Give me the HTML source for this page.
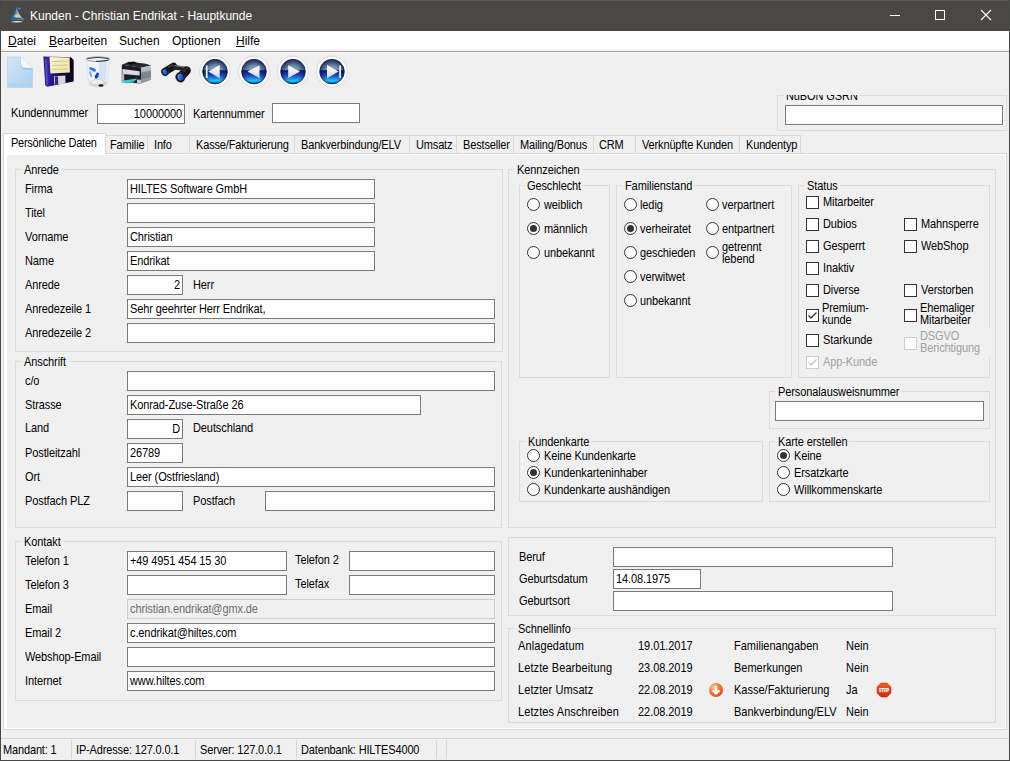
<!DOCTYPE html><html><head><meta charset="utf-8"><style>
html,body{margin:0;padding:0}
body{width:1010px;height:761px;overflow:hidden;background:#f0f0f0;position:relative;font-family:"Liberation Sans",sans-serif}
.a{position:absolute}
.t{position:absolute;font-size:11px;line-height:13px;white-space:nowrap;color:#000;letter-spacing:-0.1px;transform:scaleY(1.12);transform-origin:0 10px}
.t2{line-height:10.7px}
.t12{position:absolute;font-size:12px;line-height:14px;white-space:nowrap;color:#000}
u{text-decoration:underline;text-decoration-thickness:1px;text-underline-offset:1px}
</style></head><body>
<div class="a" style="left:0px;top:0px;width:1010px;height:31px;background:#4a4845"></div>
<div class="a" style="left:0px;top:0px;width:1010px;height:1px;background:#5c5a58"></div>
<svg class="a" style="left:8px;top:5px" width="20" height="20" viewBox="0 0 20 20">
<defs><linearGradient id="ig" x1="0" y1="0" x2="1" y2="0"><stop offset="0" stop-color="#1a66d0"/><stop offset="0.45" stop-color="#3c8ce8"/><stop offset="0.6" stop-color="#a8c8f0"/><stop offset="1" stop-color="#d8d8f0"/></linearGradient>
<radialGradient id="iy" cx="0.5" cy="0.5" r="0.5"><stop offset="0" stop-color="#fff080"/><stop offset="0.6" stop-color="#e8c830"/><stop offset="1" stop-color="#e8c830" stop-opacity="0"/></radialGradient></defs>
<path d="M8.6,2 Q7.6,9.5 1.8,14.6 L15.9,14.6 Q10,9.5 8.6,2 Z" fill="url(#ig)"/>
<ellipse cx="8.9" cy="11" rx="3" ry="2.2" fill="url(#iy)"/>
<path d="M4,12.8 L13.6,12.8 L15.2,14.2 L2.6,14.2 Z" fill="#1e5cc0"/>
<path d="M2.5,17 Q9,14.8 15.5,17 Q9,17.8 2.5,17 Z" fill="#e8ecec"/>
<circle cx="11.5" cy="3.4" r="0.9" fill="#5a9ae8"/>
</svg>
<div class="t12" style="left:30px;top:9px;color:#fff">Kunden - Christian Endrikat - Hauptkunde</div>
<div class="a" style="left:890px;top:15px;width:10px;height:1px;background:#fff"></div>
<div class="a" style="left:935px;top:10px;width:10px;height:10px;border:1px solid #fff;box-sizing:border-box"></div>
<svg class="a" style="left:980px;top:9px" width="12" height="12"><line x1="1" y1="1" x2="11" y2="11" stroke="#fff" stroke-width="1.1"/><line x1="11" y1="1" x2="1" y2="11" stroke="#fff" stroke-width="1.1"/></svg>
<div class="a" style="left:1px;top:31px;width:1008px;height:18px;background:#fff"></div>
<div class="a" style="left:1px;top:49px;width:1008px;height:2px;background:#f4f4f4"></div>
<div class="a" style="left:1px;top:51px;width:1008px;height:1px;background:#a0a0a0"></div>
<div class="a" style="left:1px;top:52px;width:1008px;height:1px;background:#f8f8f8"></div>
<div class="t12" style="left:8px;top:34px;"><u>D</u>atei</div>
<div class="t12" style="left:49px;top:34px;"><u>B</u>earbeiten</div>
<div class="t12" style="left:119px;top:34px;">Suchen</div>
<div class="t12" style="left:172px;top:34px;">Optionen</div>
<div class="t12" style="left:236px;top:34px;"><u>H</u>ilfe</div>
<svg class="a" style="left:0;top:52px" width="370" height="40" viewBox="0 52 370 40">
<defs>
<linearGradient id="pg" x1="0" y1="0" x2="1" y2="1"><stop offset="0" stop-color="#cfe6fa"/><stop offset="1" stop-color="#acd0f0"/></linearGradient>
<linearGradient id="fl" x1="0" y1="0" x2="1" y2="0"><stop offset="0" stop-color="#201470"/><stop offset="0.15" stop-color="#3424b0"/><stop offset="0.35" stop-color="#1c1270"/><stop offset="0.6" stop-color="#100a40"/><stop offset="1" stop-color="#060610"/></linearGradient>
<linearGradient id="lab" x1="0" y1="0" x2="1" y2="1"><stop offset="0" stop-color="#fbf6d0"/><stop offset="1" stop-color="#eee49a"/></linearGradient>
<linearGradient id="nb" x1="0" y1="0" x2="0" y2="1"><stop offset="0" stop-color="#98a0b0"/><stop offset="0.44" stop-color="#6a94b0"/><stop offset="0.46" stop-color="#0c1660"/><stop offset="0.66" stop-color="#1a48c8"/><stop offset="0.88" stop-color="#20c8f8"/><stop offset="1" stop-color="#0a4aa0"/></linearGradient>
<radialGradient id="nv" cx="0.5" cy="0.6" r="0.55"><stop offset="0.55" stop-color="#06104a" stop-opacity="0"/><stop offset="1" stop-color="#06104a" stop-opacity="0.75"/></radialGradient>
<linearGradient id="tri" x1="0" y1="0" x2="0" y2="1"><stop offset="0" stop-color="#ffffff"/><stop offset="1" stop-color="#d8d8dc"/></linearGradient>
<linearGradient id="prs" x1="0" y1="0" x2="0" y2="1"><stop offset="0" stop-color="#c4c8cc"/><stop offset="1" stop-color="#8a8e94"/></linearGradient>
<linearGradient id="ppr" x1="0" y1="0" x2="1" y2="1"><stop offset="0" stop-color="#50b8f8"/><stop offset="0.5" stop-color="#40c8d8"/><stop offset="1" stop-color="#108040"/></linearGradient>
<linearGradient id="lens" x1="0" y1="0" x2="1" y2="1"><stop offset="0" stop-color="#60b0ff"/><stop offset="0.6" stop-color="#1858e0"/><stop offset="1" stop-color="#0a2a80"/></linearGradient>
</defs>
<!-- new doc -->
<path d="M7.5,57 L20.5,57 Q25,61 32.5,68 L32.5,87.5 L7.5,87.5 Z" fill="url(#pg)" stroke="#b0cce8" stroke-width="0.6"/>
<path d="M21,57.5 Q20.5,64.5 23,67.8 Q28,68.3 32.2,68.2 L32.5,69.5 Q27,70 22.5,69.5 Q19.8,66 20.5,57 Z" fill="#9cc0e0" opacity="0.7"/>
<path d="M20.8,57 Q20.5,64.5 23,67.5 Q28,67.8 32.5,68 Q25,61 20.8,57 Z" fill="#f4faff"/>
<rect x="8" y="83" width="24" height="4" fill="#a8d0f4" opacity="0.6"/>
<!-- floppy -->
<path d="M43.4,56.4 L70.8,57.2 L73.6,60 L73.6,81.6 L47.3,86.7 L45.2,85.2 Z" fill="url(#fl)"/>
<path d="M49.5,57.1 L69.6,57.6 L69.9,72.4 L50.4,73.6 Z" fill="url(#lab)"/>
<path d="M52,61.5 L67.5,61.2 M52.3,65.4 L67.7,65.1 M52.6,69.3 L67.9,69" stroke="#b8b090" stroke-width="0.7"/>
<path d="M53.8,76.2 L65.3,75.6 L65.5,83.8 L54.2,84.6 Z" fill="#d4d4dc"/>
<path d="M54.8,76.6 L58,76.4 L58.2,84.2 L55,84.4 Z" fill="#302878"/>
<path d="M44.5,59 L47,58.8 L48.2,84.5 L46,85 Z" fill="#7060e0" opacity="0.55"/>
<!-- trash -->
<path d="M86.5,59.5 L109.5,59.5 L107,85 Q98,89 89,85 Z" fill="#f0f4f8" stroke="#d0d8e0" stroke-width="0.6"/>
<path d="M99,61.5 L107.5,61.5 L106,80 L99,80 Z" fill="#cfe0f4" opacity="0.9"/>
<ellipse cx="98" cy="59.2" rx="11.8" ry="2.3" fill="#eef2f6" stroke="#8a9098" stroke-width="0.9"/>
<path d="M87,58.6 Q98,56.2 109,58.6" fill="none" stroke="#404448" stroke-width="1"/>
<path d="M96,61.3 Q103,61.2 108.5,60" fill="none" stroke="#202428" stroke-width="0.9"/>
<ellipse cx="97.8" cy="83" rx="8.8" ry="4" fill="#d4d6d8"/>
<ellipse cx="97" cy="82" rx="6" ry="2.2" fill="#eceeef"/>
<ellipse cx="101" cy="85.5" rx="2.6" ry="1.3" fill="#1a1a1a"/>
<path d="M90.5,68.5 L94.5,70" stroke="#2a78e8" stroke-width="2.6" stroke-linecap="round"/>
<path d="M93.5,68.2 L96,71.6 L92.8,71.6 Z" fill="#2a78e8"/>
<path d="M97.6,74 L96.2,77.2" stroke="#0c3cd8" stroke-width="2.8" stroke-linecap="round"/>
<path d="M99.2,76.2 L95,78.6 L94.8,74.8 Z" fill="#0c3cd8"/>
<path d="M90,72 L91.2,76" stroke="#7aa4e8" stroke-width="2" stroke-linecap="round"/>
<!-- printer -->
<path d="M141,67.5 L151,65.5 L151,80 L141,83.4 Z" fill="url(#prs)"/>
<path d="M141,72.5 L151,70.5 L151,77 L141,79.5 Z" fill="#56687e" opacity="0.55"/>
<path d="M121.8,64.8 L129,61.8 L146,63.8 L151,65.5 L141,67.5 Z" fill="#262a2e"/>
<path d="M127,63 L133,61.6 L137,62.6 L131,64.4 Z" fill="#080808"/>
<path d="M121.8,64.8 L141,67.5 L141,83.4 L121.8,82.2 Z" fill="#1a1c20"/>
<path d="M122.4,69 L139.6,71.2 L139.6,75.6 L122.4,73.9 Z" fill="#d6dae2"/>
<path d="M121.8,74 L124.2,74.3 L124.2,82.3 L121.8,82.2 Z" fill="#b4b8bc"/>
<path d="M137,79.4 L141,79.8 L141,83.4 L137,83 Z" fill="#c4c8cc"/>
<path d="M123.2,80.4 L137.2,78.6 L133,82.9 L124.5,83.3 Z" fill="url(#ppr)"/>
<!-- binoculars -->
<line x1="166" y1="71" x2="173.5" y2="66.5" stroke="#141414" stroke-width="7.5" stroke-linecap="round"/>
<line x1="181" y1="76.5" x2="186.5" y2="70.5" stroke="#141414" stroke-width="8.6" stroke-linecap="round"/>
<path d="M172.5,64.5 L185.5,66.8 L184.5,71 L173.5,69.5 Z" fill="#262626"/>
<path d="M174.5,65.5 L184,67.2" stroke="#8a8a8a" stroke-width="0.9"/>
<path d="M168,67.5 L173,64.5" stroke="#606060" stroke-width="0.8"/>
<path d="M183.5,72 L188,67" stroke="#5a5a5a" stroke-width="0.8"/>
<ellipse cx="165" cy="72" rx="3.6" ry="4" transform="rotate(-30 165 72)" fill="#0a0a0a" stroke="#505050" stroke-width="0.5"/>
<ellipse cx="165.2" cy="72" rx="2.2" ry="2.9" transform="rotate(-30 165.2 72)" fill="url(#lens)"/>
<ellipse cx="180.3" cy="77.3" rx="4.6" ry="5" transform="rotate(-30 180.3 77.3)" fill="#0a0a0a" stroke="#505050" stroke-width="0.5"/>
<ellipse cx="180.6" cy="77.2" rx="3" ry="3.6" transform="rotate(-30 180.6 77.2)" fill="url(#lens)"/>
<!-- nav buttons -->
<circle cx="215" cy="71.6" r="15.6" fill="#fbfbfb" stroke="#d8d8d8" stroke-width="0.9"/><circle cx="215" cy="71.6" r="12.3" fill="url(#nb)"/><circle cx="215" cy="71.6" r="12.3" fill="url(#nv)" stroke="#0a1a58" stroke-width="0.7"/><circle cx="254" cy="71.6" r="15.6" fill="#fbfbfb" stroke="#d8d8d8" stroke-width="0.9"/><circle cx="254" cy="71.6" r="12.3" fill="url(#nb)"/><circle cx="254" cy="71.6" r="12.3" fill="url(#nv)" stroke="#0a1a58" stroke-width="0.7"/><circle cx="293" cy="71.6" r="15.6" fill="#fbfbfb" stroke="#d8d8d8" stroke-width="0.9"/><circle cx="293" cy="71.6" r="12.3" fill="url(#nb)"/><circle cx="293" cy="71.6" r="12.3" fill="url(#nv)" stroke="#0a1a58" stroke-width="0.7"/><circle cx="332" cy="71.6" r="15.6" fill="#fbfbfb" stroke="#d8d8d8" stroke-width="0.9"/><circle cx="332" cy="71.6" r="12.3" fill="url(#nb)"/><circle cx="332" cy="71.6" r="12.3" fill="url(#nv)" stroke="#0a1a58" stroke-width="0.7"/>
<rect x="205.8" y="65.5" width="1.8" height="12.5" fill="#f0f0f4"/>
<polygon points="208.2,71.6 219.7,65 219.7,78.2" fill="url(#tri)"/>
<polygon points="247.5,71.6 259.5,65.2 259.5,78" fill="url(#tri)"/>
<polygon points="300,71.6 288.2,65.3 288.2,78.1" fill="url(#tri)"/>
<polygon points="338.6,71.6 327,65 327,78.2" fill="url(#tri)"/>
<rect x="339.2" y="65.5" width="1.8" height="12.5" fill="#f0f0f4"/>
</svg>
<div class="t" style="left:11px;top:107px;">Kundennummer</div>
<div class="a" style="left:97px;top:104px;width:88px;height:20px;border:1px solid #7a7a7a;background:#ffffff;box-sizing:border-box"></div>
<div class="t" style="left:97px;width:85px;text-align:right;top:108px;color:#000;">10000000</div>
<div class="t" style="left:193px;top:108px;">Kartennummer</div>
<div class="a" style="left:272px;top:103px;width:88px;height:20px;border:1px solid #7a7a7a;background:#ffffff;box-sizing:border-box"></div>
<div class="a" style="left:777px;top:95px;width:230px;height:36px;border:1px solid #dcdcdc;box-sizing:border-box"></div>
<div class="a" style="left:784px;top:94px;width:75px;height:2px;background:#f0f0f0"></div>
<div class="a" style="left:784px;top:95px;width:75px;height:5px;overflow:hidden;background:#f0f0f0"><div class="t" style="left:2px;top:-5px;letter-spacing:-0.1px">NuBON GSRN</div></div>
<div class="a" style="left:785px;top:105px;width:218px;height:20px;border:1px solid #7a7a7a;background:#ffffff;box-sizing:border-box"></div>
<div class="a" style="left:3px;top:153px;width:1004px;height:577px;border:1px solid #d9d9d9;background:#fff;box-sizing:border-box"></div>
<div class="a" style="left:7px;top:155px;width:998px;height:573px;background:#f0f0f0"></div>
<div class="a" style="left:105px;top:135px;width:43px;height:18px;border:1px solid #d9d9d9;border-bottom:none;background:#f0f0f0;box-sizing:border-box"></div>
<div class="t" style="left:110px;top:139px;letter-spacing:-0.15px">Familie</div>
<div class="a" style="left:147px;top:135px;width:43px;height:18px;border:1px solid #d9d9d9;border-bottom:none;background:#f0f0f0;box-sizing:border-box"></div>
<div class="t" style="left:154px;top:139px;letter-spacing:-0.15px">Info</div>
<div class="a" style="left:189px;top:135px;width:106px;height:18px;border:1px solid #d9d9d9;border-bottom:none;background:#f0f0f0;box-sizing:border-box"></div>
<div class="t" style="left:196px;top:139px;letter-spacing:-0.15px">Kasse/Fakturierung</div>
<div class="a" style="left:294px;top:135px;width:116px;height:18px;border:1px solid #d9d9d9;border-bottom:none;background:#f0f0f0;box-sizing:border-box"></div>
<div class="t" style="left:301px;top:139px;letter-spacing:-0.15px">Bankverbindung/ELV</div>
<div class="a" style="left:409px;top:135px;width:48px;height:18px;border:1px solid #d9d9d9;border-bottom:none;background:#f0f0f0;box-sizing:border-box"></div>
<div class="t" style="left:416px;top:139px;letter-spacing:-0.15px">Umsatz</div>
<div class="a" style="left:456px;top:135px;width:58px;height:18px;border:1px solid #d9d9d9;border-bottom:none;background:#f0f0f0;box-sizing:border-box"></div>
<div class="t" style="left:463px;top:139px;letter-spacing:-0.15px">Bestseller</div>
<div class="a" style="left:513px;top:135px;width:81px;height:18px;border:1px solid #d9d9d9;border-bottom:none;background:#f0f0f0;box-sizing:border-box"></div>
<div class="t" style="left:520px;top:139px;letter-spacing:-0.15px">Mailing/Bonus</div>
<div class="a" style="left:593px;top:135px;width:43px;height:18px;border:1px solid #d9d9d9;border-bottom:none;background:#f0f0f0;box-sizing:border-box"></div>
<div class="t" style="left:599px;top:139px;letter-spacing:-0.15px">CRM</div>
<div class="a" style="left:635px;top:135px;width:105px;height:18px;border:1px solid #d9d9d9;border-bottom:none;background:#f0f0f0;box-sizing:border-box"></div>
<div class="t" style="left:642px;top:139px;letter-spacing:-0.15px">Verknüpfte Kunden</div>
<div class="a" style="left:739px;top:135px;width:62px;height:18px;border:1px solid #d9d9d9;border-bottom:none;background:#f0f0f0;box-sizing:border-box"></div>
<div class="t" style="left:746px;top:139px;letter-spacing:-0.15px">Kundentyp</div>
<div class="a" style="left:3px;top:133px;width:103px;height:21px;border:1px solid #d9d9d9;border-bottom:none;background:#fff;box-sizing:border-box"></div>
<div class="a" style="left:4px;top:153px;width:101px;height:1px;background:#fff"></div>
<div class="t" style="left:11px;top:137px;letter-spacing:-0.25px">Persönliche Daten</div>
<div class="a" style="left:15px;top:169px;width:488px;height:183px;border:1px solid #dcdcdc;box-sizing:border-box"></div>
<div class="t" style="left:21px;top:164px;padding:0 2px 0 3px;background:#f0f0f0;">Anrede</div>
<div class="t" style="left:25px;top:183px;">Firma</div>
<div class="a" style="left:127px;top:179px;width:248px;height:20px;border:1px solid #7a7a7a;background:#ffffff;box-sizing:border-box"></div>
<div class="t" style="left:130px;top:183px;color:#000;">HILTES Software GmbH</div>
<div class="t" style="left:25px;top:207px;">Titel</div>
<div class="a" style="left:127px;top:203px;width:248px;height:20px;border:1px solid #7a7a7a;background:#ffffff;box-sizing:border-box"></div>
<div class="t" style="left:25px;top:231px;">Vorname</div>
<div class="a" style="left:127px;top:227px;width:248px;height:20px;border:1px solid #7a7a7a;background:#ffffff;box-sizing:border-box"></div>
<div class="t" style="left:130px;top:231px;color:#000;">Christian</div>
<div class="t" style="left:25px;top:255px;">Name</div>
<div class="a" style="left:127px;top:251px;width:248px;height:20px;border:1px solid #7a7a7a;background:#ffffff;box-sizing:border-box"></div>
<div class="t" style="left:130px;top:255px;color:#000;">Endrikat</div>
<div class="t" style="left:25px;top:279px;">Anrede</div>
<div class="a" style="left:127px;top:275px;width:56px;height:20px;border:1px solid #7a7a7a;background:#ffffff;box-sizing:border-box"></div>
<div class="t" style="left:25px;top:303px;">Anredezeile 1</div>
<div class="a" style="left:127px;top:299px;width:368px;height:20px;border:1px solid #7a7a7a;background:#ffffff;box-sizing:border-box"></div>
<div class="t" style="left:130px;top:303px;color:#000;">Sehr geehrter Herr Endrikat,</div>
<div class="t" style="left:25px;top:327px;">Anredezeile 2</div>
<div class="a" style="left:127px;top:323px;width:368px;height:20px;border:1px solid #7a7a7a;background:#ffffff;box-sizing:border-box"></div>
<div class="a" style="left:127px;top:275px;width:56px;height:20px;border:1px solid #7a7a7a;background:#ffffff;box-sizing:border-box"></div>
<div class="t" style="left:127px;width:53px;text-align:right;top:279px;color:#000;">2</div>
<div class="t" style="left:193px;top:279px;">Herr</div>
<div class="a" style="left:15px;top:361px;width:487px;height:167px;border:1px solid #dcdcdc;box-sizing:border-box"></div>
<div class="t" style="left:21px;top:356px;padding:0 2px 0 3px;background:#f0f0f0;">Anschrift</div>
<div class="t" style="left:25px;top:375px;">c/o</div>
<div class="a" style="left:127px;top:371px;width:368px;height:20px;border:1px solid #7a7a7a;background:#ffffff;box-sizing:border-box"></div>
<div class="t" style="left:25px;top:399px;">Strasse</div>
<div class="a" style="left:127px;top:395px;width:294px;height:20px;border:1px solid #7a7a7a;background:#ffffff;box-sizing:border-box"></div>
<div class="t" style="left:130px;top:399px;color:#000;">Konrad-Zuse-Straße 26</div>
<div class="t" style="left:25px;top:422px;">Land</div>
<div class="a" style="left:127px;top:419px;width:56px;height:20px;border:1px solid #7a7a7a;background:#ffffff;box-sizing:border-box"></div>
<div class="t" style="left:127px;width:53px;text-align:right;top:423px;color:#000;">D</div>
<div class="t" style="left:25px;top:447px;">Postleitzahl</div>
<div class="a" style="left:127px;top:443px;width:56px;height:20px;border:1px solid #7a7a7a;background:#ffffff;box-sizing:border-box"></div>
<div class="t" style="left:130px;top:447px;color:#000;">26789</div>
<div class="t" style="left:25px;top:471px;">Ort</div>
<div class="a" style="left:127px;top:467px;width:368px;height:20px;border:1px solid #7a7a7a;background:#ffffff;box-sizing:border-box"></div>
<div class="t" style="left:130px;top:471px;color:#000;">Leer (Ostfriesland)</div>
<div class="t" style="left:25px;top:495px;">Postfach PLZ</div>
<div class="a" style="left:127px;top:491px;width:56px;height:20px;border:1px solid #7a7a7a;background:#ffffff;box-sizing:border-box"></div>
<div class="t" style="left:193px;top:422px;">Deutschland</div>
<div class="t" style="left:193px;top:495px;">Postfach</div>
<div class="a" style="left:265px;top:491px;width:230px;height:20px;border:1px solid #7a7a7a;background:#ffffff;box-sizing:border-box"></div>
<div class="a" style="left:15px;top:541px;width:487px;height:160px;border:1px solid #dcdcdc;box-sizing:border-box"></div>
<div class="t" style="left:21px;top:536px;padding:0 2px 0 3px;background:#f0f0f0;">Kontakt</div>
<div class="t" style="left:25px;top:555px;">Telefon 1</div>
<div class="a" style="left:127px;top:551px;width:160px;height:20px;border:1px solid #7a7a7a;background:#ffffff;box-sizing:border-box"></div>
<div class="t" style="left:130px;top:555px;color:#000;">+49 4951 454 15 30</div>
<div class="t" style="left:25px;top:579px;">Telefon 3</div>
<div class="a" style="left:127px;top:575px;width:160px;height:20px;border:1px solid #7a7a7a;background:#ffffff;box-sizing:border-box"></div>
<div class="t" style="left:25px;top:603px;">Email</div>
<div class="a" style="left:127px;top:599px;width:368px;height:20px;border:1px solid #cccccc;background:#f0f0f0;box-sizing:border-box"></div>
<div class="t" style="left:130px;top:603px;color:#6d6d6d;">christian.endrikat@gmx.de</div>
<div class="t" style="left:25px;top:627px;">Email 2</div>
<div class="a" style="left:127px;top:623px;width:368px;height:20px;border:1px solid #7a7a7a;background:#ffffff;box-sizing:border-box"></div>
<div class="t" style="left:130px;top:627px;color:#000;">c.endrikat@hiltes.com</div>
<div class="t" style="left:25px;top:651px;">Webshop-Email</div>
<div class="a" style="left:127px;top:647px;width:368px;height:20px;border:1px solid #7a7a7a;background:#ffffff;box-sizing:border-box"></div>
<div class="t" style="left:25px;top:675px;">Internet</div>
<div class="a" style="left:127px;top:671px;width:368px;height:20px;border:1px solid #7a7a7a;background:#ffffff;box-sizing:border-box"></div>
<div class="t" style="left:130px;top:675px;color:#000;">www.hiltes.com</div>
<div class="t" style="left:295px;top:554px;">Telefon 2</div>
<div class="a" style="left:349px;top:551px;width:146px;height:20px;border:1px solid #7a7a7a;background:#ffffff;box-sizing:border-box"></div>
<div class="t" style="left:295px;top:578px;">Telefax</div>
<div class="a" style="left:349px;top:575px;width:146px;height:20px;border:1px solid #7a7a7a;background:#ffffff;box-sizing:border-box"></div>
<div class="a" style="left:508px;top:169px;width:488px;height:359px;border:1px solid #dcdcdc;box-sizing:border-box"></div>
<div class="t" style="left:514px;top:164px;padding:0 2px 0 3px;background:#f0f0f0;">Kennzeichen</div>
<div class="a" style="left:519px;top:185px;width:91px;height:193px;border:1px solid #dcdcdc;box-sizing:border-box"></div>
<div class="t" style="left:524px;top:180px;padding:0 2px 0 3px;background:#f0f0f0;">Geschlecht</div>
<div class="a" style="left:527px;top:198px;width:13px;height:13px;border:1px solid #333;border-radius:50%;background:#fff;box-sizing:border-box"></div>
<div class="t" style="left:544px;top:199px;">weiblich</div>
<div class="a" style="left:527px;top:222px;width:13px;height:13px;border:1px solid #333;border-radius:50%;background:#fff;box-sizing:border-box"></div>
<div class="a" style="left:530px;top:225px;width:7px;height:7px;border-radius:50%;background:#333"></div>
<div class="t" style="left:544px;top:223px;">männlich</div>
<div class="a" style="left:527px;top:246px;width:13px;height:13px;border:1px solid #333;border-radius:50%;background:#fff;box-sizing:border-box"></div>
<div class="t" style="left:544px;top:247px;">unbekannt</div>
<div class="a" style="left:616px;top:185px;width:176px;height:193px;border:1px solid #dcdcdc;box-sizing:border-box"></div>
<div class="t" style="left:622px;top:180px;padding:0 2px 0 3px;background:#f0f0f0;">Familienstand</div>
<div class="a" style="left:624px;top:198px;width:13px;height:13px;border:1px solid #333;border-radius:50%;background:#fff;box-sizing:border-box"></div>
<div class="t" style="left:640px;top:199px;">ledig</div>
<div class="a" style="left:624px;top:222px;width:13px;height:13px;border:1px solid #333;border-radius:50%;background:#fff;box-sizing:border-box"></div>
<div class="a" style="left:627px;top:225px;width:7px;height:7px;border-radius:50%;background:#333"></div>
<div class="t" style="left:640px;top:223px;">verheiratet</div>
<div class="a" style="left:624px;top:246px;width:13px;height:13px;border:1px solid #333;border-radius:50%;background:#fff;box-sizing:border-box"></div>
<div class="t" style="left:640px;top:247px;">geschieden</div>
<div class="a" style="left:624px;top:270px;width:13px;height:13px;border:1px solid #333;border-radius:50%;background:#fff;box-sizing:border-box"></div>
<div class="t" style="left:640px;top:271px;">verwitwet</div>
<div class="a" style="left:624px;top:294px;width:13px;height:13px;border:1px solid #333;border-radius:50%;background:#fff;box-sizing:border-box"></div>
<div class="t" style="left:640px;top:295px;">unbekannt</div>
<div class="a" style="left:706px;top:198px;width:13px;height:13px;border:1px solid #333;border-radius:50%;background:#fff;box-sizing:border-box"></div>
<div class="t" style="left:722px;top:199px;">verpartnert</div>
<div class="a" style="left:706px;top:222px;width:13px;height:13px;border:1px solid #333;border-radius:50%;background:#fff;box-sizing:border-box"></div>
<div class="t" style="left:722px;top:223px;">entpartnert</div>
<div class="a" style="left:706px;top:246px;width:13px;height:13px;border:1px solid #333;border-radius:50%;background:#fff;box-sizing:border-box"></div>
<div class="t t2" style="left:722px;top:242px">getrennt<br>lebend</div>
<div class="a" style="left:798px;top:185px;width:192px;height:193px;border:1px solid #dcdcdc;box-sizing:border-box"></div>
<div class="t" style="left:804px;top:180px;padding:0 2px 0 3px;background:#f0f0f0;">Status</div>
<div class="a" style="left:980px;top:328px;width:12px;height:30px;background:#f0f0f0"></div>
<div class="a" style="left:806px;top:196px;width:13px;height:13px;border:1px solid #333;background:#fff;box-sizing:border-box"></div>
<div class="t" style="left:823px;top:196px;color:#000">Mitarbeiter</div>
<div class="a" style="left:806px;top:218px;width:13px;height:13px;border:1px solid #333;background:#fff;box-sizing:border-box"></div>
<div class="t" style="left:823px;top:218px;color:#000">Dubios</div>
<div class="a" style="left:806px;top:240px;width:13px;height:13px;border:1px solid #333;background:#fff;box-sizing:border-box"></div>
<div class="t" style="left:823px;top:240px;color:#000">Gesperrt</div>
<div class="a" style="left:806px;top:262px;width:13px;height:13px;border:1px solid #333;background:#fff;box-sizing:border-box"></div>
<div class="t" style="left:823px;top:262px;color:#000">Inaktiv</div>
<div class="a" style="left:806px;top:284px;width:13px;height:13px;border:1px solid #333;background:#fff;box-sizing:border-box"></div>
<div class="t" style="left:823px;top:284px;color:#000">Diverse</div>
<div class="a" style="left:806px;top:309px;width:13px;height:13px;border:1px solid #333;background:#fff;box-sizing:border-box"></div>
<svg class="a" style="left:806px;top:309px" width="13" height="13"><polyline points="2.5,6.5 5,9 10.5,3.5" fill="none" stroke="#333" stroke-width="1.3"/></svg>
<div class="t t2" style="left:822px;top:303px;color:#000">Premium-<br>kunde</div>
<div class="a" style="left:806px;top:334px;width:13px;height:13px;border:1px solid #333;background:#fff;box-sizing:border-box"></div>
<div class="t" style="left:823px;top:334px;color:#000">Starkunde</div>
<div class="a" style="left:806px;top:356px;width:13px;height:13px;border:1px solid #cccccc;background:#fff;box-sizing:border-box"></div>
<svg class="a" style="left:806px;top:356px" width="13" height="13"><polyline points="2.5,6.5 5,9 10.5,3.5" fill="none" stroke="#c0c0c0" stroke-width="1.3"/></svg>
<div class="t" style="left:823px;top:356px;color:#a0a0a0">App-Kunde</div>
<div class="a" style="left:904px;top:218px;width:13px;height:13px;border:1px solid #333;background:#fff;box-sizing:border-box"></div>
<div class="t" style="left:921px;top:218px;color:#000">Mahnsperre</div>
<div class="a" style="left:904px;top:240px;width:13px;height:13px;border:1px solid #333;background:#fff;box-sizing:border-box"></div>
<div class="t" style="left:921px;top:240px;color:#000">WebShop</div>
<div class="a" style="left:904px;top:284px;width:13px;height:13px;border:1px solid #333;background:#fff;box-sizing:border-box"></div>
<div class="t" style="left:921px;top:284px;color:#000">Verstorben</div>
<div class="a" style="left:904px;top:309px;width:13px;height:13px;border:1px solid #333;background:#fff;box-sizing:border-box"></div>
<div class="t t2" style="left:920px;top:303px;color:#000">Ehemaliger<br>Mitarbeiter</div>
<div class="a" style="left:904px;top:337px;width:13px;height:13px;border:1px solid #cccccc;background:#fff;box-sizing:border-box"></div>
<div class="t t2" style="left:920px;top:331px;color:#a0a0a0">DSGVO<br>Berichtigung</div>
<div class="a" style="left:769px;top:391px;width:221px;height:38px;border:1px solid #dcdcdc;box-sizing:border-box"></div>
<div class="t" style="left:775px;top:386px;padding:0 2px 0 3px;background:#f0f0f0;">Personalausweisnummer</div>
<div class="a" style="left:775px;top:401px;width:209px;height:20px;border:1px solid #7a7a7a;background:#ffffff;box-sizing:border-box"></div>
<div class="a" style="left:519px;top:441px;width:244px;height:61px;border:1px solid #dcdcdc;box-sizing:border-box"></div>
<div class="t" style="left:525px;top:436px;padding:0 2px 0 3px;background:#f0f0f0;">Kundenkarte</div>
<div class="a" style="left:527px;top:449px;width:13px;height:13px;border:1px solid #333;border-radius:50%;background:#fff;box-sizing:border-box"></div>
<div class="t" style="left:544px;top:450px;">Keine Kundenkarte</div>
<div class="a" style="left:527px;top:466px;width:13px;height:13px;border:1px solid #333;border-radius:50%;background:#fff;box-sizing:border-box"></div>
<div class="a" style="left:530px;top:469px;width:7px;height:7px;border-radius:50%;background:#333"></div>
<div class="t" style="left:544px;top:467px;">Kundenkarteninhaber</div>
<div class="a" style="left:527px;top:483px;width:13px;height:13px;border:1px solid #333;border-radius:50%;background:#fff;box-sizing:border-box"></div>
<div class="t" style="left:544px;top:484px;">Kundenkarte aushändigen</div>
<div class="a" style="left:769px;top:441px;width:221px;height:61px;border:1px solid #dcdcdc;box-sizing:border-box"></div>
<div class="t" style="left:775px;top:436px;padding:0 2px 0 3px;background:#f0f0f0;">Karte erstellen</div>
<div class="a" style="left:777px;top:449px;width:13px;height:13px;border:1px solid #333;border-radius:50%;background:#fff;box-sizing:border-box"></div>
<div class="a" style="left:780px;top:452px;width:7px;height:7px;border-radius:50%;background:#333"></div>
<div class="t" style="left:794px;top:450px;">Keine</div>
<div class="a" style="left:777px;top:466px;width:13px;height:13px;border:1px solid #333;border-radius:50%;background:#fff;box-sizing:border-box"></div>
<div class="t" style="left:794px;top:467px;">Ersatzkarte</div>
<div class="a" style="left:777px;top:483px;width:13px;height:13px;border:1px solid #333;border-radius:50%;background:#fff;box-sizing:border-box"></div>
<div class="t" style="left:794px;top:484px;">Willkommenskarte</div>
<div class="a" style="left:508px;top:537px;width:488px;height:79px;border:1px solid #dcdcdc;box-sizing:border-box"></div>
<div class="t" style="left:519px;top:551px;">Beruf</div>
<div class="a" style="left:613px;top:547px;width:280px;height:20px;border:1px solid #7a7a7a;background:#ffffff;box-sizing:border-box"></div>
<div class="t" style="left:519px;top:573px;">Geburtsdatum</div>
<div class="a" style="left:613px;top:569px;width:88px;height:20px;border:1px solid #7a7a7a;background:#ffffff;box-sizing:border-box"></div>
<div class="t" style="left:616px;top:573px;color:#000;">14.08.1975</div>
<div class="t" style="left:519px;top:595px;">Geburtsort</div>
<div class="a" style="left:613px;top:591px;width:280px;height:20px;border:1px solid #7a7a7a;background:#ffffff;box-sizing:border-box"></div>
<div class="a" style="left:508px;top:628px;width:488px;height:95px;border:1px solid #dcdcdc;box-sizing:border-box"></div>
<div class="t" style="left:515px;top:623px;padding:0 2px 0 3px;background:#f0f0f0;">Schnellinfo</div>
<div class="t" style="left:518px;top:640px;letter-spacing:0.1px">Anlagedatum</div>
<div class="t" style="left:638px;top:640px;letter-spacing:-0.05px">19.01.2017</div>
<div class="t" style="left:734px;top:640px;letter-spacing:0">Familienangaben</div>
<div class="t" style="left:846px;top:640px;letter-spacing:0">Nein</div>
<div class="t" style="left:518px;top:662px;letter-spacing:0.1px">Letzte Bearbeitung</div>
<div class="t" style="left:638px;top:662px;letter-spacing:-0.05px">23.08.2019</div>
<div class="t" style="left:734px;top:662px;letter-spacing:0">Bemerkungen</div>
<div class="t" style="left:846px;top:662px;letter-spacing:0">Nein</div>
<div class="t" style="left:518px;top:684px;letter-spacing:0.1px">Letzter Umsatz</div>
<div class="t" style="left:638px;top:684px;letter-spacing:-0.05px">22.08.2019</div>
<div class="t" style="left:734px;top:684px;letter-spacing:0">Kasse/Fakturierung</div>
<div class="t" style="left:846px;top:684px;letter-spacing:0">Ja</div>
<div class="t" style="left:518px;top:706px;letter-spacing:0.1px">Letztes Anschreiben</div>
<div class="t" style="left:638px;top:706px;letter-spacing:-0.05px">22.08.2019</div>
<div class="t" style="left:734px;top:706px;letter-spacing:0">Bankverbindung/ELV</div>
<div class="t" style="left:846px;top:706px;letter-spacing:0">Nein</div>
<svg class="a" style="left:708px;top:682px" width="16" height="16" viewBox="0 0 16 16">
<defs><radialGradient id="og" cx="0.35" cy="0.3" r="0.8"><stop offset="0" stop-color="#ffd0a0"/><stop offset="0.45" stop-color="#f47838"/><stop offset="1" stop-color="#e04818"/></radialGradient></defs>
<circle cx="8" cy="8" r="7" fill="url(#og)"/>
<path d="M8,3.8 L8,11" stroke="#fff" stroke-width="2.2"/><path d="M4.6,8.2 L8,11.6 L11.4,8.2" fill="none" stroke="#fff" stroke-width="2.1" stroke-linejoin="miter"/></svg>
<svg class="a" style="left:876px;top:682px" width="16" height="16" viewBox="0 0 16 16">
<defs><linearGradient id="sg" x1="0" y1="0" x2="0" y2="1"><stop offset="0" stop-color="#f85a28"/><stop offset="1" stop-color="#d82a08"/></linearGradient></defs>
<polygon points="5,1 11,1 15,5 15,11 11,15 5,15 1,11 1,5" fill="url(#sg)" stroke="#c82008" stroke-width="0.5"/>
<text x="8" y="9.9" font-size="4.6" font-family="Liberation Sans" font-weight="bold" fill="#fff" stroke="#fff" stroke-width="0.25" text-anchor="middle" textLength="10" lengthAdjust="spacingAndGlyphs">STOP</text></svg>
<div class="a" style="left:1px;top:738px;width:1008px;height:1px;background:#d7d7d7"></div>
<div class="a" style="left:71px;top:740px;width:1px;height:19px;background:#d7d7d7"></div>
<div class="a" style="left:195px;top:740px;width:1px;height:19px;background:#d7d7d7"></div>
<div class="a" style="left:296px;top:740px;width:1px;height:19px;background:#d7d7d7"></div>
<div class="a" style="left:436px;top:740px;width:1px;height:19px;background:#d7d7d7"></div>
<div class="a" style="left:446px;top:740px;width:1px;height:19px;background:#d7d7d7"></div>
<div class="t" style="left:3px;top:744px;letter-spacing:-0.15px">Mandant: 1</div>
<div class="t" style="left:76px;top:744px;letter-spacing:-0.15px">IP-Adresse: 127.0.0.1</div>
<div class="t" style="left:200px;top:744px;letter-spacing:-0.15px">Server: 127.0.0.1</div>
<div class="t" style="left:301px;top:744px;letter-spacing:-0.15px">Datenbank: HILTES4000</div>
<div class="a" style="left:0px;top:0px;width:1px;height:761px;background:#474747"></div>
<div class="a" style="left:1009px;top:0px;width:1px;height:761px;background:#474747"></div>
<div class="a" style="left:0px;top:760px;width:1010px;height:1px;background:#474747"></div>
</body></html>
